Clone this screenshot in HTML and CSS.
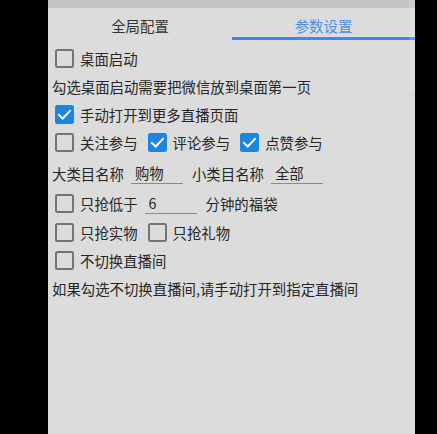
FILE: index.html
```html
<!DOCTYPE html>
<html lang="zh">
<head>
<meta charset="utf-8">
<link rel="stylesheet" href="styles.css">
</head>
<body>
<div class="screen">
  <div class="side-left"></div>
  <div class="panel">
    <div class="statusbar"></div>
    <div class="tabs">
      <div class="tab">全局配置</div>
      <div class="tab active">参数设置</div>
    </div>
    <div class="content">
      <div class="row">
        <label class="item"><span class="cb"></span><span>桌面启动</span></label>
      </div>
      <div class="row text">勾选桌面启动需要把微信放到桌面第一页</div>
      <div class="row">
        <label class="item"><span class="cb checked"><svg viewBox="0 0 19 19"><path d="M4 9.9 L7.7 13.5 L15 5.9"/></svg></span><span>手动打开到更多直播页面</span></label>
      </div>
      <div class="row">
        <label class="item"><span class="cb"></span><span>关注参与</span></label>
        <label class="item"><span class="cb checked"><svg viewBox="0 0 19 19"><path d="M4 9.9 L7.7 13.5 L15 5.9"/></svg></span><span>评论参与</span></label>
        <label class="item"><span class="cb checked"><svg viewBox="0 0 19 19"><path d="M4 9.9 L7.7 13.5 L15 5.9"/></svg></span><span>点赞参与</span></label>
      </div>
      <div class="row input-row first-input">
        <span class="label">大类目名称</span>
        <span class="field">购物</span>
        <span class="label">小类目名称</span>
        <span class="field">全部</span>
      </div>
      <div class="row input-row">
        <label class="item"><span class="cb"></span><span>只抢低于</span></label>
        <span class="field">6</span>
        <span class="label">分钟的福袋</span>
      </div>
      <div class="row">
        <label class="item"><span class="cb"></span><span>只抢实物</span></label>
        <label class="item"><span class="cb"></span><span>只抢礼物</span></label>
      </div>
      <div class="row">
        <label class="item"><span class="cb"></span><span>不切换直播间</span></label>
      </div>
      <div class="row text">如果勾选不切换直播间,请手动打开到指定直播间</div>
    </div>
    <div class="scroll-strip"></div>
  </div>
  <div class="side-right"></div>
</div>
</body>
</html>
```
FILE: styles.css
```css
html, body {
  margin: 0;
  padding: 0;
  background: #000;
}
body {
  width: 437px;
  height: 434px;
  overflow: hidden;
  font-family: "Noto Sans CJK SC", "Noto Sans", sans-serif;
  font-size: 14.4px;
  color: #262626;
}
.screen {
  display: flex;
  height: 434px;
}
.side-left {
  width: 48px;
  background: #000;
}
.side-right {
  flex: 1;
  background: #000;
}
.panel {
  position: relative;
  width: 367px;
  background: #dcdcdc;
  display: flex;
  flex-direction: column;
}
.statusbar {
  height: 8px;
  background: #c4c4c4;
}
.tabs {
  display: grid;
  grid-template-columns: 184px 1fr;
  height: 32px;
}
.tab {
  box-sizing: border-box;
  height: 32px;
  padding-top: 8px;
  line-height: 20px;
  text-align: center;
  color: #333;
  border-bottom: 3px solid transparent;
}
.tab.active {
  color: #4f8fe3;
  border-bottom-color: #3f87f2;
}
.content {
  display: flex;
  flex-direction: column;
  padding-top: 4px;
}
.row {
  height: 28px;
  display: flex;
  align-items: center;
  gap: 10px;
  padding-left: 7px;
  white-space: nowrap;
}
.row.text {
  padding-left: 4px;
}
.input-row {
  height: 30px;
  gap: 0;
}
.first-input {
  margin-top: 2px;
  padding-left: 4px;
}
.item {
  display: flex;
  align-items: center;
  gap: 6px;
}
.cb {
  box-sizing: border-box;
  width: 19px;
  height: 19px;
  border: 2px solid #747474;
  border-radius: 2.5px;
  display: flex;
  align-items: center;
  justify-content: center;
}
.cb.checked {
  background: #1c86e0;
  border-color: #1c86e0;
}
.cb svg {
  width: 19px;
  height: 19px;
  flex: none;
}
.cb svg path {
  fill: none;
  stroke: #fff;
  stroke-width: 2;
  stroke-linecap: square;
}
.field {
  box-sizing: border-box;
  width: 52px;
  height: 21px;
  line-height: 19px;
  padding-left: 4px;
  border-bottom: 1.5px solid #8a8a8a;
  margin-left: 7px;
  margin-right: 9px;
}
.scroll-strip {
  position: absolute;
  right: 0;
  top: 0;
  width: 6px;
  height: 90px;
  background: rgba(255, 255, 255, 0.12);
}
```
